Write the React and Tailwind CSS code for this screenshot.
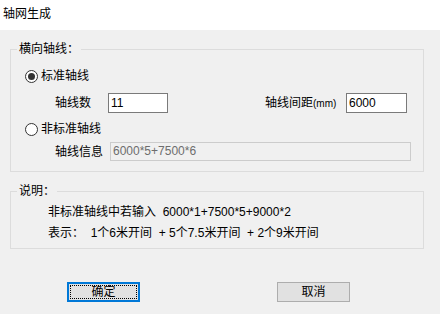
import React from "react";

function Radio({ checked, label }) {
  return (
    <div className="flex items-center h-[16px]">
      <span className="w-[13px] h-[13px] rounded-full border border-[#333333] bg-white flex items-center justify-center">
        {checked && <span className="w-[7px] h-[7px] rounded-full bg-[#333333]" />}
      </span>
      <span className="ml-[3px]">{label}</span>
    </div>
  );
}

export default function App() {
  return (
    <div
      className="w-[441px] h-[314px] bg-white text-[12px] leading-[16px] text-black"
      style={{ fontFamily: '"Liberation Sans", "Noto Sans CJK SC", sans-serif' }}
    >
      <div className="h-[30px] bg-white flex items-center pl-[3px] pb-[2px]">轴网生成</div>
      <div className="h-[284px] w-[440px] bg-[#f0f0f0] pt-[11px] pl-[10px]">
        <fieldset className="w-[414px] border border-[#dcdcdc]">
          <legend className="ml-[6px] px-[2px] h-[16px] leading-[16px]">横向轴线：</legend>
          <div className="pl-[14px] pt-[11px] pb-[10px]">
            <Radio checked label="标准轴线" />
            <div className="flex items-center mt-[9px] pl-[30px] h-[20px]">
              <span className="w-[53px]">轴线数</span>
              <div className="w-[60px] h-[20px] border border-[#7a7a7a] bg-white pl-[2px] leading-[18px]">11</div>
              <span className="ml-[97px] w-[81px]">
                轴线间距<span className="text-[10px]">(mm)</span>
              </span>
              <div className="w-[61px] h-[20px] border border-[#7a7a7a] bg-white pl-[2px] leading-[18px]">6000</div>
            </div>
            <div className="mt-[8px]">
              <Radio label="非标准轴线" />
            </div>
            <div className="flex items-center mt-[5px] pl-[30px] h-[19px]">
              <span className="w-[55px]">轴线信息</span>
              <div className="w-[301px] h-[19px] border border-[#cccccc] bg-[#f0f0f0] pl-[2px] leading-[17px] text-[#6d6d6d]">
                6000*5+7500*6
              </div>
            </div>
          </div>
        </fieldset>
        <fieldset className="mt-[11px] w-[414px] border border-[#dcdcdc]">
          <legend className="ml-[6px] px-[2px] h-[16px] leading-[16px]">说明：</legend>
          <div className="pl-[37px] pt-[5px] pb-[7px]">
            <div className="h-[16px]">非标准轴线中若输入&nbsp;&nbsp;6000*1+7500*5+9000*2</div>
            <div className="h-[16px] mt-[5px] whitespace-pre">表示：  1个6米开间  + 5个7.5米开间  + 2个9米开间</div>
          </div>
        </fieldset>
        <div className="flex mt-[33px] pl-[57px]">
          <div className="w-[73px] h-[20px] border-2 border-[#0078d7] bg-[#e1e1e1] p-[1px]">
            <div className="w-full h-full border border-dotted border-black flex items-center justify-center leading-[14px]">
              确定
            </div>
          </div>
          <div className="ml-[137px] w-[73px] h-[20px] border border-[#adadad] bg-[#e1e1e1] flex items-center justify-center">
            取消
          </div>
        </div>
      </div>
    </div>
  );
}
